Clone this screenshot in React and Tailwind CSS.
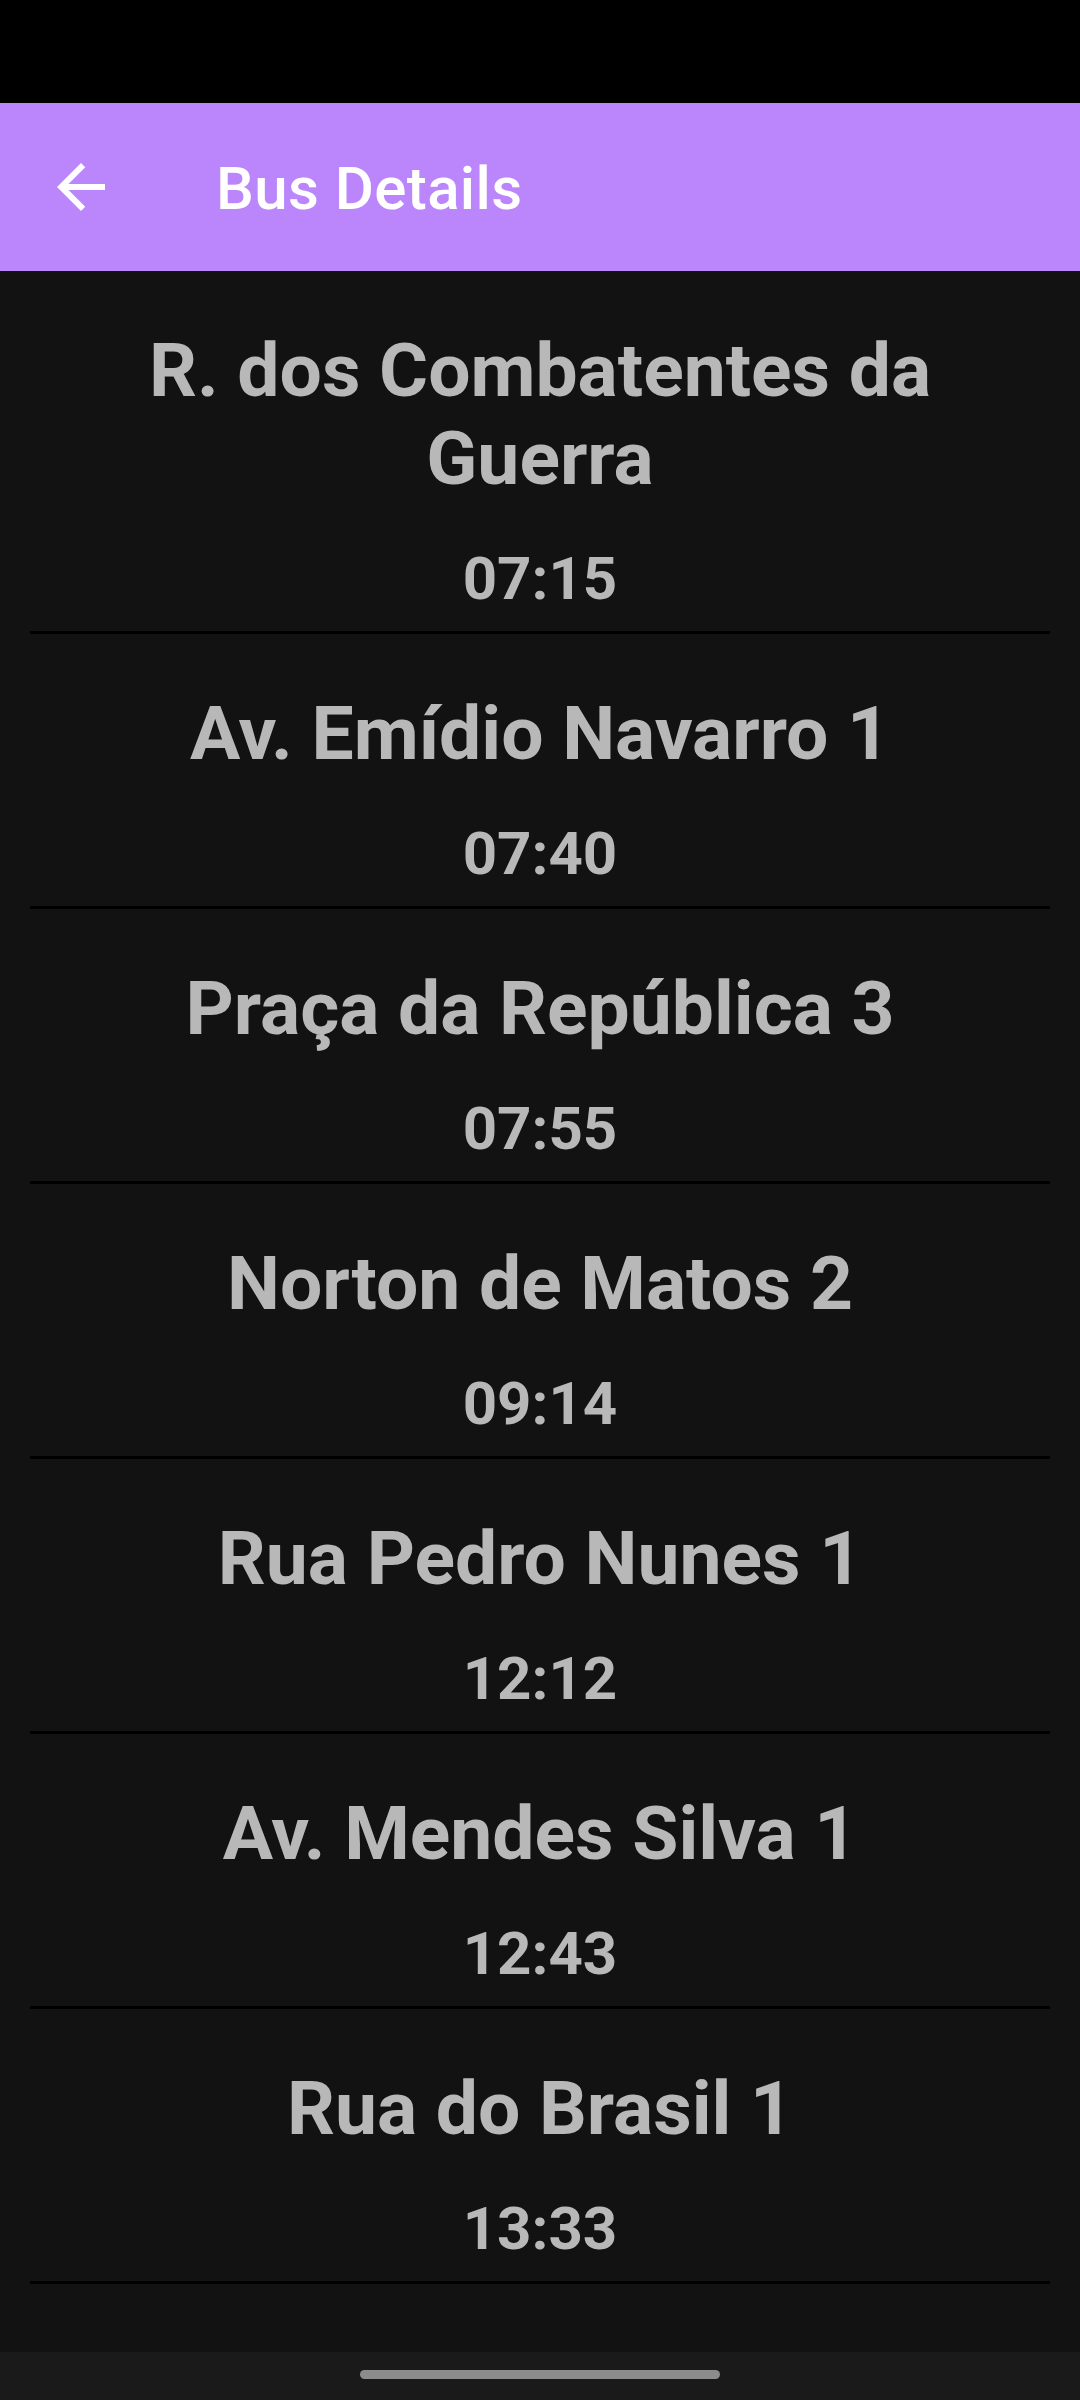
import React from 'react';

const stops = [
  { name: 'R. dos Combatentes da Guerra', time: '07:15' },
  { name: 'Av. Emídio Navarro 1', time: '07:40' },
  { name: 'Praça da República 3', time: '07:55' },
  { name: 'Norton de Matos 2', time: '09:14' },
  { name: 'Rua Pedro Nunes 1', time: '12:12' },
  { name: 'Av. Mendes Silva 1', time: '12:43' },
  { name: 'Rua do Brasil 1', time: '13:33' },
];

const BackArrow = () => (
  <svg width="72" height="72" viewBox="0 0 24 24" fill="#ffffff">
    <path d="M20 11H7.83l5.59-5.59L12 4l-8 8 8 8 1.41-1.41L7.83 13H20v-2z" />
  </svg>
);

const App = () => {
  return (
    <div className="w-[1080px] h-[2400px] bg-[#121212] flex flex-col overflow-hidden" style={{ fontFamily: 'Roboto, "Liberation Sans", sans-serif' }}>
      {/* status bar */}
      <div className="h-[103px] bg-black shrink-0" />

      {/* toolbar */}
      <div className="h-[168px] bg-[#bb86fc] flex items-center shrink-0">
        <div className="w-[168px] h-[168px] flex items-center pl-[45px]">
          <BackArrow />
        </div>
        <span className="ml-[48px] mt-[4px] text-white text-[60px] font-medium leading-none tracking-[0.4px]">Bus Details</span>
      </div>

      {/* list */}
      <div className="flex-1 flex flex-col">
        {stops.map((s) => (
          <div key={s.name}>
            <div className="pt-[55px] pb-[17px] px-[30px] text-center text-[#b8b8b8] font-bold">
              <div className="text-[75px] leading-[88px]">{s.name}</div>
              <div className="mt-[42px] text-[60px] leading-[70px]">{s.time}</div>
            </div>
            <div className="mx-[30px] h-[3px] bg-black" />
          </div>
        ))}
      </div>

      {/* nav bar */}
      <div className="h-[48px] bg-[#1a1a1a] flex justify-center pt-[18px] shrink-0">
        <div className="w-[360px] h-[9px] rounded-full bg-[#8c8c8c]" />
      </div>
    </div>
  );
};

export default App;
